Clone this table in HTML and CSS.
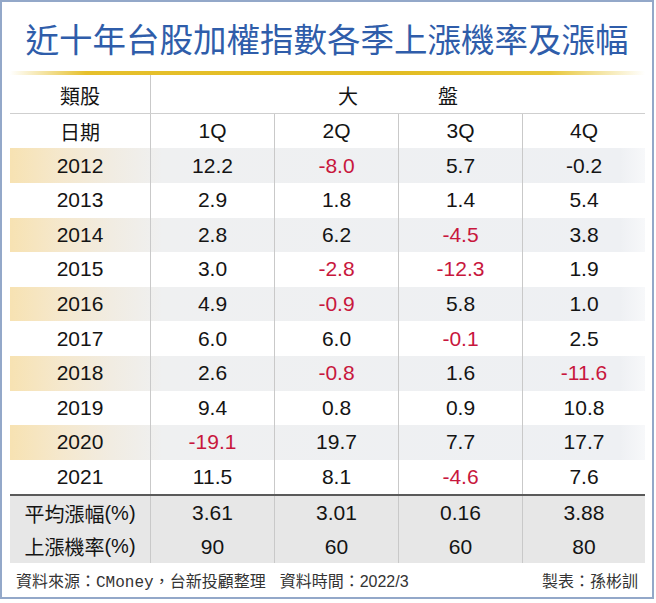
FILE: index.html
```html
<!DOCTYPE html>
<html lang="zh-Hant">
<head>
<meta charset="utf-8">
<title>近十年台股加權指數各季上漲機率及漲幅</title>
<link rel="stylesheet" href="styles.css">
</head>
<body>
<div class="frame">
  <h1 class="title">近十年台股加權指數各季上漲機率及漲幅</h1>
  <div class="gold"></div>
  <div class="grid">
    <div class="row head1"><div class="cell first cjk">類股</div><div class="cell span cjk">大<span class="gap"></span>盤</div></div>
    <div class="row head2"><div class="cell first cjk">日期</div><div class="cell">1Q</div><div class="cell">2Q</div><div class="cell">3Q</div><div class="cell">4Q</div></div>
    <div class="row data stripe"><div class="cell first">2012</div><div class="cell">12.2</div><div class="cell neg">-8.0</div><div class="cell">5.7</div><div class="cell">-0.2</div></div>
    <div class="row data"><div class="cell first">2013</div><div class="cell">2.9</div><div class="cell">1.8</div><div class="cell">1.4</div><div class="cell">5.4</div></div>
    <div class="row data stripe"><div class="cell first">2014</div><div class="cell">2.8</div><div class="cell">6.2</div><div class="cell neg">-4.5</div><div class="cell">3.8</div></div>
    <div class="row data"><div class="cell first">2015</div><div class="cell">3.0</div><div class="cell neg">-2.8</div><div class="cell neg">-12.3</div><div class="cell">1.9</div></div>
    <div class="row data stripe"><div class="cell first">2016</div><div class="cell">4.9</div><div class="cell neg">-0.9</div><div class="cell">5.8</div><div class="cell">1.0</div></div>
    <div class="row data"><div class="cell first">2017</div><div class="cell">6.0</div><div class="cell">6.0</div><div class="cell neg">-0.1</div><div class="cell">2.5</div></div>
    <div class="row data stripe"><div class="cell first">2018</div><div class="cell">2.6</div><div class="cell neg">-0.8</div><div class="cell">1.6</div><div class="cell neg">-11.6</div></div>
    <div class="row data"><div class="cell first">2019</div><div class="cell">9.4</div><div class="cell">0.8</div><div class="cell">0.9</div><div class="cell">10.8</div></div>
    <div class="row data stripe"><div class="cell first">2020</div><div class="cell neg">-19.1</div><div class="cell">19.7</div><div class="cell">7.7</div><div class="cell">17.7</div></div>
    <div class="row data"><div class="cell first">2021</div><div class="cell">11.5</div><div class="cell">8.1</div><div class="cell neg">-4.6</div><div class="cell">7.6</div></div>
    <div class="summary">
      <div class="row sum"><div class="cell first cjk">平均漲幅<span class="lat">(%)</span></div><div class="cell">3.61</div><div class="cell">3.01</div><div class="cell">0.16</div><div class="cell">3.88</div></div>
      <div class="row sum"><div class="cell first cjk">上漲機率<span class="lat">(%)</span></div><div class="cell">90</div><div class="cell">60</div><div class="cell">60</div><div class="cell">80</div></div>
    </div>
  </div>
  <div class="footer">
    <span class="src">資料來源：<span class="mono">CMoney</span>，台新投顧整理</span>
    <span class="date">資料時間：<span class="num">2022/3</span></span>
    <span class="maker">製表：孫彬訓</span>
  </div>
</div>
</body>
</html>
```
FILE: styles.css
```css
html, body {
  margin: 0;
  padding: 0;
  background: #ffffff;
}

.frame {
  box-sizing: border-box;
  width: 654px;
  height: 599px;
  border: 2px solid #93a8c9;
  background: #ffffff;
  display: flex;
  flex-direction: column;
}

.title {
  margin: 0;
  height: 70px;
  padding-top: 2px;
  box-sizing: border-box;
  display: flex;
  align-items: center;
  justify-content: center;
  font-family: "Noto Sans CJK TC", "Noto Sans CJK SC", sans-serif;
  font-weight: 400;
  font-size: 33.5px;
  color: #2f5daa;
  letter-spacing: 0;
  white-space: nowrap;
}

.gold {
  height: 4px;
  margin: 0 8px;
  width: 635px;
  background: linear-gradient(to right, rgba(230, 190, 40, 0) 0%, #e6c02c 12%, #e2bc22 60%, #e8c73a 85%, rgba(232, 199, 58, 0) 100%);
}

.grid {
  width: 635px;
  margin-left: 8px;
  display: flex;
  flex-direction: column;
}

.row {
  display: grid;
  grid-template-columns: 140px 124px 124px 124px 123px;
}

.cell {
  display: flex;
  align-items: center;
  justify-content: center;
  font-family: "Liberation Sans", Arial, sans-serif;
  font-size: 21px;
  color: #141414;
  border-left: 1px solid #c9c9c9;
  white-space: nowrap;
}

.cell.first {
  border-left: none;
}

.cjk {
  font-family: "Noto Sans CJK TC", "Noto Sans CJK SC", sans-serif;
  font-size: 20px;
}

.lat {
  font-family: "Liberation Sans", Arial, sans-serif;
  font-size: 20px;
}

.head1 {
  height: 38px;
  border-bottom: 1px solid #cfcfcf;
}

.head1 .cell {
  padding-top: 2px;
}

.head1 .span {
  grid-column: 2 / 6;
}

.gap {
  display: inline-block;
  width: 80px;
}

.head2 {
  height: 34px;
}

.data {
  height: 34.6px;
}

.stripe {
  background: linear-gradient(to right, #f7e2b2 0%, #f5e8cd 8%, #f1ece2 16%, #eff0f1 24%, #eef0f3 96%, #f7f8fa 100%);
}

.neg {
  color: #c8173d;
}

.summary {
  border-top: 2px solid #5a5a5a;
  background: #e7e7e7;
}

.sum {
  height: 33.5px;
}

.footer {
  height: 34px;
  display: flex;
  align-items: center;
  padding: 0 14px 0 14px;
  font-family: "Noto Sans CJK TC", "Noto Sans CJK SC", sans-serif;
  font-size: 16px;
  color: #333333;
  white-space: nowrap;
}

.mono {
  font-family: "Liberation Mono", "DejaVu Sans Mono", monospace;
  font-size: 16px;
}

.num {
  font-family: "Liberation Sans", Arial, sans-serif;
  font-size: 16px;
}

.date {
  margin-left: 14px;
}

.maker {
  margin-left: auto;
}
```
